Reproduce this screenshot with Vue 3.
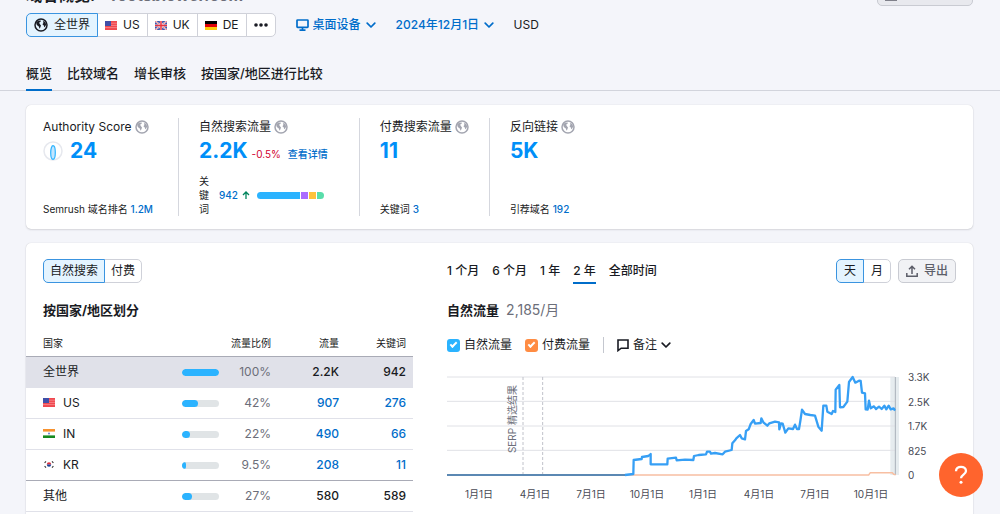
<script setup>
import { ref } from 'vue';

const scope = ref('world');
const trafficType = ref('organic');
const period = ref('2 年');
const unit = ref('天');
const showOrganic = ref(true);
const showPaid = ref(true);

const scopes = [
  { id: 'us', label: 'US' },
  { id: 'gb', label: 'UK' },
  { id: 'de', label: 'DE' }
];

const tabs = ['概览', '比较域名', '增长审核', '按国家/地区进行比较'];

const keywordShares = [
  { id: 'a', width: 42, color: '#2bb3ff' },
  { id: 'b', width: 7, color: '#ab6cfe' },
  { id: 'c', width: 7, color: '#fdc23c' },
  { id: 'd', width: 7, color: '#59ddaa' }
];

const rows = [
  { name: '全世界', share: '100%', bar: 100, traffic: '2.2K', keywords: '942' },
  { name: 'US', flag: 'us', share: '42%', bar: 42, traffic: '907', keywords: '276', link: true },
  { name: 'IN', flag: 'in', share: '22%', bar: 22, traffic: '490', keywords: '66', link: true },
  { name: 'KR', flag: 'kr', share: '9.5%', bar: 9.5, traffic: '208', keywords: '11', link: true },
  { name: '其他', share: '27%', bar: 27, traffic: '580', keywords: '589' }
];

const periods = ['1 个月', '6 个月', '1 年', '2 年', '全部时间'];
const yLabels = ['3.3K', '2.5K', '1.7K', '825', '0'];
const xLabels = ['1月1日', '4月1日', '7月1日', '10月1日', '1月1日', '4月1日', '7月1日', '10月1日'];

const organicLine = [
  '534,294 559,291 560,249 584,246 585,240 604,237 611,231 611,262 661,262 662,245 687,242 689,250',
  '714,248 739,249 741,237 755,234 777,232 780,224 789,224 792,230 804,228 827,232 834,224',
  '854,219 856,199 864,190 868,184 879,174 884,184 894,187 897,162 905,157 911,141 920,129 924,140',
  '941,138 943,124 949,136 961,146 967,139 984,134 996,136 997,157 1002,139 1007,140 1015,167',
  '1024,154 1038,156 1044,143 1050,156 1056,156 1060,132 1065,98 1074,111 1090,114 1104,116',
  '1114,149 1124,161 1129,86 1138,86 1141,104 1154,111 1158,102 1165,105 1166,38 1177,24 1179,91',
  '1189,90 1201,74 1206,15 1217,0 1225,17 1236,11 1241,12 1245,47 1254,49 1256,97 1262,98 1266,71',
  '1271,94 1281,88 1287,96 1296,89 1304,96 1312,86 1318,97 1325,86 1331,97 1340,94 1344,101'
].join(' ');
</script>

<template>
  <div class="page">
    <svg class="sprite" aria-hidden="true">
      <symbol id="globe" viewBox="0 0 14 14">
        <circle cx="7" cy="7" r="6" fill="none" stroke="currentColor" stroke-width="1.5" />
        <path d="M2 4.6 4 2.8 6.8 2.4 6.6 3.8 5.2 4.6 5.6 5.8 7 7.4 6.4 9.2 5.6 10.8 4.8 8.6 2.8 7Z" fill="currentColor" />
        <path d="M9 3 11.2 3.8 12.2 6.4 11.2 8.6 10.2 9.2 9.8 7.4 8.4 6.2 9.4 5Z" fill="currentColor" />
      </symbol>
      <symbol id="chevron" viewBox="0 0 10 7">
        <path d="M1.2 1.2 5 5 8.8 1.2" fill="none" stroke="currentColor" stroke-width="1.7" stroke-linecap="round" stroke-linejoin="round" />
      </symbol>
      <symbol id="flag-us" viewBox="0 0 12 9">
        <rect width="12" height="9" fill="#f0484f" />
        <path d="M0 2.2H12M0 4.4H12M0 6.6H12" stroke="#f9a5a8" stroke-width=".6" />
        <rect width="6" height="5" fill="#3f4fa8" />
      </symbol>
      <symbol id="flag-gb" viewBox="0 0 12 9">
        <rect width="12" height="9" fill="#3d56ae" />
        <path d="M0 0 12 9M12 0 0 9" stroke="#fff" stroke-width="1.6" />
        <path d="M0 0 12 9M12 0 0 9" stroke="#e0404a" stroke-width=".7" />
        <path d="M6 0V9M0 4.5H12" stroke="#fff" stroke-width="2.2" />
        <path d="M6 0V9M0 4.5H12" stroke="#e8333f" stroke-width="1.5" />
      </symbol>
      <symbol id="flag-de" viewBox="0 0 12 9">
        <rect width="12" height="3" fill="#000" />
        <rect y="3" width="12" height="3" fill="#e0040a" />
        <rect y="6" width="12" height="3" fill="#fccb0c" />
      </symbol>
      <symbol id="flag-in" viewBox="0 0 12 9">
        <rect width="12" height="9" fill="#fff" />
        <rect width="12" height="2.6" fill="#f7922f" />
        <rect y="6.4" width="12" height="2.6" fill="#158a20" />
        <circle cx="6" cy="4.5" r="1" fill="#6a7fd0" />
      </symbol>
      <symbol id="flag-kr" viewBox="0 0 12 9">
        <rect width="12" height="9" fill="#fff" />
        <path d="M3.8 4.5a2.2 2.2 0 0 1 4.4 0Z" fill="#e0303c" />
        <path d="M3.8 4.5a2.2 2.2 0 0 0 4.4 0Z" fill="#1b4398" />
        <path d="M1.6 2.8 3 1.4M9 1.4 10.4 2.8M1.6 6.2 3 7.6M9 7.6 10.4 6.2" stroke="#333" stroke-width="1.1" />
      </symbol>
    </svg>

    <header class="title-bar">
      <h1>域名概览: <span>rootsblower.com</span></h1>
      <button type="button" class="btn export-pdf" aria-label="导出到 PDF">
        <svg width="12" height="14" viewBox="0 0 12 14" fill="none" stroke="currentColor" stroke-width="1.6">
          <path d="M6 9V2M3 5l3-3 3 3M.8 9v4h10.4V9" />
        </svg>
      </button>
    </header>

    <div class="filters">
      <div class="pills">
        <button type="button" :class="{ active: scope === 'world' }" @click="scope = 'world'">
          <svg width="14" height="14"><use href="#globe" /></svg>
          全世界
        </button>
        <button
          v-for="item in scopes"
          :key="item.id"
          type="button"
          :class="{ active: scope === item.id }"
          @click="scope = item.id"
        >
          <svg width="12" height="9"><use :href="`#flag-${item.id}`" /></svg>
          {{ item.label }}
        </button>
        <button type="button" aria-label="更多">
          <svg width="14" height="4" viewBox="0 0 14 4" fill="currentColor">
            <circle cx="2" cy="2" r="1.8" /><circle cx="7" cy="2" r="1.8" /><circle cx="12" cy="2" r="1.8" />
          </svg>
        </button>
      </div>
      <label class="dropdown">
        <svg width="13" height="12" viewBox="0 0 13 12" fill="none" stroke="currentColor" stroke-width="1.7">
          <rect x="1" y="1" width="11" height="7.4" rx=".6" />
          <path d="M3.5 11.1h6M6.5 8.4v2.6" />
        </svg>
        <select aria-label="设备"><option>桌面设备</option></select>
        <svg width="10" height="7"><use href="#chevron" /></svg>
      </label>
      <label class="dropdown">
        <select aria-label="日期"><option>2024年12月1日</option></select>
        <svg width="10" height="7"><use href="#chevron" /></svg>
      </label>
      <span class="currency">USD</span>
    </div>

    <nav class="tabs">
      <a v-for="(tab, i) in tabs" :key="tab" href="#" :class="{ current: i === 0 }">{{ tab }}</a>
    </nav>

    <section class="card summary">
      <div class="metric">
        <h2>Authority Score <svg width="14" height="14"><use href="#globe" /></svg></h2>
        <div class="figure">
          <svg class="score" width="20" height="20" viewBox="0 0 20 20" fill="none">
            <circle cx="10" cy="10" r="9" stroke="#e6e8ee" stroke-width="1.5" />
            <ellipse cx="10" cy="11.5" rx="2.3" ry="6.8" fill="#c4e5fe" stroke="#2bb3ff" stroke-width="1.2" />
          </svg>
          <a href="#" class="big">24</a>
        </div>
        <p class="foot">Semrush 域名排名 <a href="#">1.2M</a></p>
      </div>
      <div class="metric">
        <h2>自然搜索流量 <svg width="14" height="14"><use href="#globe" /></svg></h2>
        <div class="figure">
          <a href="#" class="big">2.2K</a>
          <span class="down">-0.5%</span>
          <a href="#" class="details">查看详情</a>
        </div>
        <div class="foot keywords">
          <span class="keyword-label">关键词</span>
          <a href="#">942</a>
          <svg width="8" height="8" viewBox="0 0 8 8" fill="none" stroke="#00845c" stroke-width="1.3">
            <path d="M4 8V1M1 4l3-3 3 3" />
          </svg>
          <div class="shares">
            <i v-for="s in keywordShares" :key="s.id" :style="{ flexGrow: s.width, background: s.color }"></i>
          </div>
        </div>
      </div>
      <div class="metric">
        <h2>付费搜索流量 <svg width="14" height="14"><use href="#globe" /></svg></h2>
        <div class="figure"><a href="#" class="big">11</a></div>
        <p class="foot">关键词 <a href="#">3</a></p>
      </div>
      <div class="metric">
        <h2>反向链接 <svg width="14" height="14"><use href="#globe" /></svg></h2>
        <div class="figure"><a href="#" class="big">5K</a></div>
        <p class="foot">引荐域名 <a href="#">192</a></p>
      </div>
    </section>

    <section class="card main">
      <div class="countries">
        <div class="pills">
          <button type="button" :class="{ active: trafficType === 'organic' }" @click="trafficType = 'organic'">自然搜索</button>
          <button type="button" :class="{ active: trafficType === 'paid' }" @click="trafficType = 'paid'">付费</button>
        </div>
        <h3>按国家/地区划分</h3>
        <table>
          <thead>
            <tr>
              <th class="name">国家</th>
              <th class="share" colspan="2">流量比例</th>
              <th class="num">流量</th>
              <th class="num last">关键词</th>
            </tr>
          </thead>
          <tbody>
            <tr v-for="(row, i) in rows" :key="row.name" :class="{ selected: i === 0, strong: i === 3 }">
              <td class="name">
                <svg v-if="row.flag" width="12" height="9"><use :href="`#flag-${row.flag}`" /></svg>{{ row.name }}
              </td>
              <td class="meter"><div class="track"><i :style="{ width: row.bar + '%' }"></i></div></td>
              <td class="percent">{{ row.share }}</td>
              <td class="num"><a v-if="row.link" href="#">{{ row.traffic }}</a><template v-else>{{ row.traffic }}</template></td>
              <td class="num last"><a v-if="row.link" href="#">{{ row.keywords }}</a><template v-else>{{ row.keywords }}</template></td>
            </tr>
          </tbody>
        </table>
      </div>

      <div class="trend">
        <div class="toolbar">
          <div class="periods">
            <button
              v-for="p in periods"
              :key="p"
              type="button"
              :class="{ current: period === p }"
              @click="period = p"
            >{{ p }}</button>
          </div>
          <div class="actions">
            <div class="pills">
              <button
                v-for="u in ['天', '月']"
                :key="u"
                type="button"
                :class="{ active: unit === u }"
                @click="unit = u"
              >{{ u }}</button>
            </div>
            <button type="button" class="btn">
              <svg width="12" height="12" viewBox="0 0 12 12" fill="none" stroke="currentColor" stroke-width="1.5">
                <path d="M6 9V1.5M3 4.3l3-3 3 3M.8 8v3.2h10.4V8" />
              </svg>
              导出
            </button>
          </div>
        </div>
        <h3>自然流量 <span>2,185/月</span></h3>
        <div class="legend">
          <label><input v-model="showOrganic" type="checkbox" class="organic"> 自然流量</label>
          <label><input v-model="showPaid" type="checkbox" class="paid"> 付费流量</label>
          <button type="button" class="notes">
            <svg width="12" height="13" viewBox="0 0 12 13" fill="none" stroke="currentColor" stroke-width="1.6">
              <path d="M1 1h10v8.2H4.2L1 11.6Z" />
            </svg>
            备注
            <svg width="10" height="7"><use href="#chevron" /></svg>
          </button>
        </div>
        <div class="chart">
          <div class="plot">
            <svg viewBox="0 0 1356 294" preserveAspectRatio="none">
              <rect x="1330" y="0" width="26" height="294" fill="#e6ecef" />
              <path class="grid" d="M0 0H1344M0 73H1344M0 147H1344M0 220H1344" />
              <path class="dash" d="M228 0V294M287 0V294" />
              <path class="cursor" d="M1345 0V294" />
              <polyline v-if="showPaid" class="paid-line" points="0,294 1265,294 1270,287 1336,287 1340,292 1346,293" />
              <path class="zero" d="M0 294H536" />
              <polyline v-if="showOrganic" class="organic-line" :points="organicLine" />
            </svg>
            <span class="event">SERP 精选结果</span>
          </div>
          <div class="y-axis">
            <span v-for="y in yLabels" :key="y">{{ y }}</span>
          </div>
          <div class="x-axis">
            <span v-for="(x, i) in xLabels" :key="i">{{ x }}</span>
          </div>
        </div>
      </div>
    </section>

    <button type="button" class="help" aria-label="帮助">
      <svg width="14" height="20" viewBox="0 0 14 20" fill="none" stroke="#fff" stroke-width="2.3">
        <path d="M2 6.2C2 3.4 4.2 1.8 7 1.8s5 1.6 5 4.2c0 3.6-5 3.6-5 7.2" />
        <circle cx="7" cy="17.2" r="1.5" fill="#fff" stroke="none" />
      </svg>
    </button>
  </div>
</template>

<style>
body {
  background: #f4f5fa;
}
</style>

<style scoped>
.page {
  height: 100vh;
  overflow: hidden;
  background: #f4f5fa;
  color: #191b23;
  font-family: Inter, "Noto Sans CJK SC", sans-serif;
  font-size: 12px;
  line-height: 16px;
}

.sprite {
  position: absolute;
  width: 0;
  height: 0;
}

h1, h2, h3, p {
  margin: 0;
}

a {
  color: #006dca;
  font-weight: 500;
  text-decoration: none;
}

button, select {
  font: inherit;
  color: inherit;
  cursor: pointer;
}

svg {
  flex: none;
}

.title-bar {
  display: flex;
  justify-content: space-between;
  align-items: flex-end;
  height: 26px;
  margin: -20px 27px 0 26px;
}

.title-bar h1 {
  font-size: 16px;
  line-height: 22px;
}

.title-bar h1 span {
  margin-left: 12px;
  color: #6c6e79;
}

.btn {
  display: flex;
  align-items: center;
  gap: 6px;
  box-sizing: border-box;
  height: 24px;
  padding: 0 7px;
  border: 1px solid #c9cbd2;
  border-radius: 5px;
  background: #f1f2f5;
  color: #5c5e69;
  font-weight: 500;
}

.export-pdf {
  width: 96px;
  background: #e8e9ee;
}

.filters {
  display: flex;
  align-items: center;
  gap: 20px;
  margin: 7px 26px 0;
}

.pills {
  display: flex;
}

.pills button {
  display: flex;
  align-items: center;
  gap: 6px;
  box-sizing: border-box;
  height: 24px;
  margin-left: -1px;
  padding: 0 7px;
  border: 1px solid #cfd1d9;
  background: #fff;
}

.pills button:first-child {
  margin-left: 0;
  border-radius: 5px 0 0 5px;
}

.pills button:last-child {
  border-radius: 0 5px 5px 0;
}

.pills button.active {
  position: relative;
  border-color: #3a94e0;
  background: #e4f4ff;
}

.dropdown {
  display: flex;
  align-items: center;
  gap: 4px;
  color: #006dca;
  font-weight: 500;
}

.dropdown select {
  appearance: none;
  padding: 0;
  border: 0;
  background: none;
}

.tabs {
  display: flex;
  gap: 15px;
  margin-top: 25px;
  padding: 0 26px;
  border-bottom: 1px solid #d2d4dc;
}

.tabs a {
  height: 27px;
  margin-bottom: -1px;
  border-bottom: 2px solid transparent;
  color: #191b23;
  font-size: 13px;
  line-height: 22px;
}

.tabs a.current {
  border-color: #006dca;
}

.card {
  margin: 14px 27px 0 26px;
  border-radius: 5px;
  background: #fff;
  box-shadow: 0 0 1px rgba(25, 27, 35, 0.2), 0 1px 2px rgba(25, 27, 35, 0.12);
}

.summary {
  display: flex;
  padding: 13px 17px;
}

.metric {
  display: flex;
  flex-direction: column;
  min-height: 98px;
  padding: 0 20px;
  border-right: 1px solid #d5d7de;
}

.metric:first-child {
  padding-left: 0;
  padding-right: 25px;
}

.metric:nth-child(2) {
  padding-right: 31px;
}

.metric:last-child {
  border: 0;
}

.metric h2 {
  display: flex;
  align-items: center;
  gap: 3px;
  font-size: 12px;
  font-weight: 400;
  line-height: 18px;
}

.metric h2 svg {
  color: #a3a5b0;
}

.figure {
  display: flex;
  align-items: baseline;
  gap: 4px;
  height: 30px;
  line-height: 30px;
}

.figure .score {
  align-self: center;
  margin-right: 3px;
}

.big {
  color: #008ff8;
  font-size: 21px;
  font-weight: 700;
}

.down {
  color: #d1002f;
  font-size: 10px;
}

.details {
  margin-left: 3px;
  font-size: 10px;
}

.foot {
  margin-top: auto;
  font-size: 10px;
  line-height: 14px;
}

.keywords {
  display: flex;
  align-items: center;
}

.keyword-label {
  width: 10px;
  margin-right: 10px;
}

.keywords svg {
  margin: 0 7px 0 4px;
}

.shares {
  display: flex;
  gap: 1px;
  width: 67px;
  height: 7px;
  border-radius: 4px;
  overflow: hidden;
}

.main {
  display: flex;
  min-height: 300px;
  padding-top: 16px;
}

.countries {
  flex: none;
  width: 387px;
}

.countries .pills, .countries h3 {
  margin-left: 17px;
}

.countries .pills button {
  padding: 0 6px;
}

h3 {
  margin-top: 17px;
  font-size: 13px;
  line-height: 20px;
}

table {
  width: 100%;
  margin-top: 10px;
  border-collapse: collapse;
  table-layout: fixed;
}

th {
  height: 26px;
  padding: 0;
  border-bottom: 1px solid #a9abb6;
  font-size: 10px;
  font-weight: 400;
  text-align: right;
}

td {
  height: 30px;
  padding: 0;
  border-bottom: 1px solid #e0e1e9;
}

th.name, td.name {
  padding-left: 17px;
  text-align: left;
}

.name svg {
  margin-right: 8px;
}

.share {
  width: 89px;
}

.percent {
  color: #6c6e79;
  text-align: right;
}

.num {
  width: 68px;
  text-align: right;
}

td.num {
  font-weight: 500;
}

.num.last {
  width: 67px;
  padding-right: 7px;
}

.track {
  width: 37px;
  height: 7px;
  border-radius: 4px;
  background: #e0e4e6;
  overflow: hidden;
}

.track i {
  display: block;
  height: 100%;
  border-radius: 4px;
  background: #2bb3ff;
}

.selected td {
  background: #e0e1e9;
}

.strong td {
  border-color: #a9abb6;
}

.trend {
  flex: 1;
  min-width: 0;
  padding: 0 17px 0 34px;
}

.toolbar {
  display: flex;
  justify-content: space-between;
}

.periods {
  display: flex;
  gap: 13px;
}

.periods button {
  height: 25px;
  padding: 0;
  border: 0;
  border-bottom: 2px solid transparent;
  background: none;
  font-weight: 500;
}

.periods button.current {
  border-color: #006dca;
}

.actions {
  display: flex;
  gap: 7px;
}

.trend h3 {
  margin-top: 16px;
}

.trend h3 span {
  margin-left: 4px;
  color: #6c6e79;
  font-size: 14px;
  font-weight: 400;
}

.legend {
  display: flex;
  align-items: center;
  margin-top: 17px;
}

.legend label {
  display: flex;
  align-items: center;
  gap: 4px;
  margin-right: 13px;
}

.legend input {
  display: grid;
  place-items: center;
  appearance: none;
  width: 13px;
  height: 13px;
  margin: 0;
  border-radius: 3px;
}

.legend input.organic {
  background: #2bb3ff;
}

.legend input.paid {
  background: #ff8c43;
}

.legend input:checked::after {
  content: '';
  width: 5px;
  height: 2px;
  margin-bottom: 2px;
  border: solid #fff;
  border-width: 0 0 2px 2px;
  transform: rotate(-45deg);
}

.notes {
  display: flex;
  align-items: center;
  gap: 4px;
  padding: 0 0 0 13px;
  border: 0;
  border-left: 1px solid #c4c7cf;
  background: none;
}

.chart {
  display: grid;
  grid-template-columns: 1fr 57px;
  margin-top: 24px;
}

.plot {
  position: relative;
  height: 98px;
}

.plot svg {
  display: block;
  width: 100%;
  height: 100%;
  overflow: visible;
}

.plot path, .plot polyline {
  fill: none;
  vector-effect: non-scaling-stroke;
}

.grid {
  stroke: #e0e1e6;
}

.dash {
  stroke: #c0c2ca;
  stroke-dasharray: 3 2;
}

.cursor {
  stroke: #a9b0b8;
}

.paid-line {
  stroke: #f8bfa2;
  stroke-width: 1.5;
}

.zero {
  stroke: #5b88b3;
  stroke-width: 2;
}

.organic-line {
  stroke: #369ff5;
  stroke-width: 2.3;
  stroke-linejoin: round;
}

.event {
  position: absolute;
  top: 8px;
  left: 57px;
  color: #6c6e79;
  font-size: 10px;
  writing-mode: vertical-rl;
  text-orientation: sideways;
  transform: rotate(180deg);
}

.y-axis {
  display: flex;
  flex-direction: column;
  justify-content: space-between;
  margin: -8px 0;
  padding-left: 9px;
  color: #484a54;
  font-size: 10px;
}

.x-axis {
  display: grid;
  grid-template-columns: repeat(8, 1fr);
  margin: 11px 0 0 4px;
  color: #484a54;
  font-size: 10px;
  text-align: center;
}

.help {
  display: grid;
  place-items: center;
  position: fixed;
  right: 17px;
  bottom: 17px;
  width: 44px;
  height: 44px;
  padding: 0;
  border: 0;
  border-radius: 50%;
  background: #ff642d;
}
</style>
